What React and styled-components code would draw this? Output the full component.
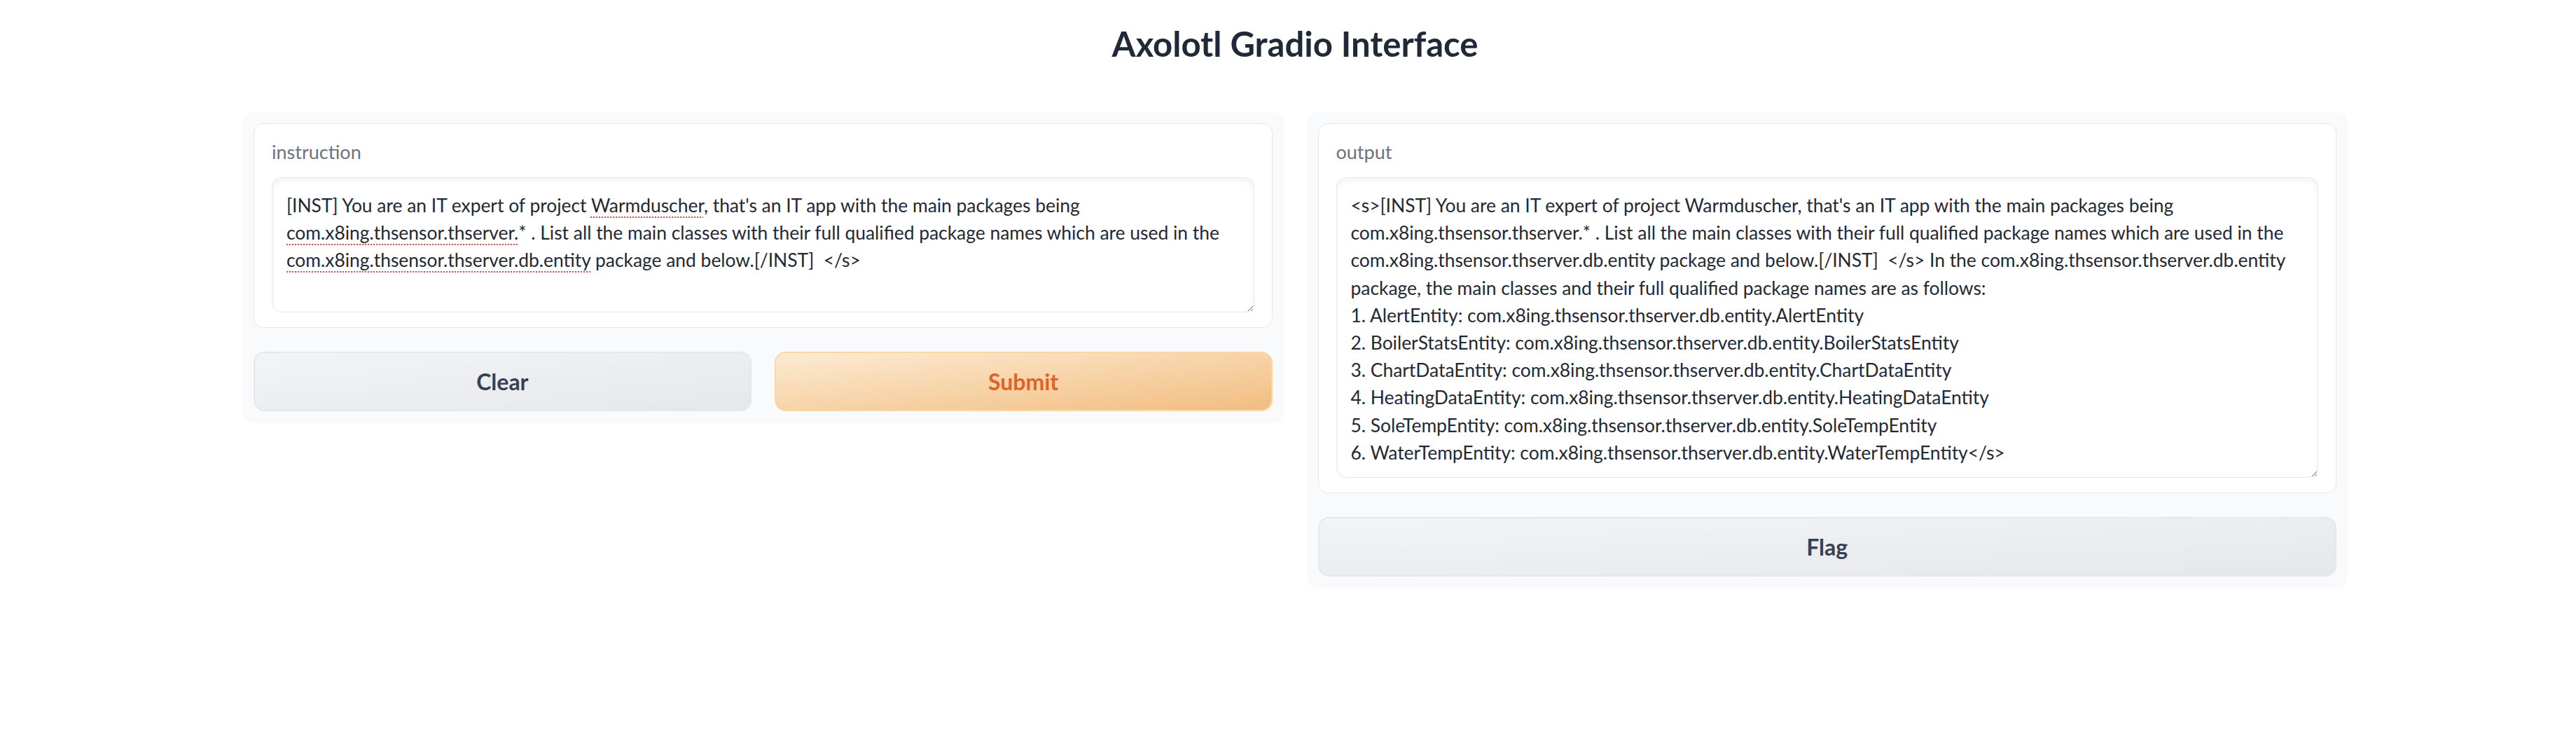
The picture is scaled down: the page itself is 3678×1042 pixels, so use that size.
import React from "react";
import styled, { createGlobalStyle, css } from "styled-components";

const GlobalStyle = createGlobalStyle`
  html, body {
    margin: 0;
    padding: 0;
    background: #ffffff;
  }
  body {
    font-family: Lato, "Noto Sans", "Liberation Sans", sans-serif;
    color: #1f2937;
  }
  * { box-sizing: border-box; }
`;

const Page = styled.div`
  display: flex;
  flex-direction: column;
  padding: 0 326px 0 346px;
`;

const Title = styled.h1`
  margin: 0 0 70px;
  padding-top: 34px;
  font-size: 49px;
  line-height: 56px;
  font-weight: 700;
  text-align: center;
  color: #1f2937;
`;

const Row = styled.div`
  display: flex;
  align-items: flex-start;
  gap: 33px;
`;

const Panel = styled.div`
  flex: 1 1 0;
  min-width: 0;
  display: flex;
  flex-direction: column;
  gap: 34px;
  padding: 16px 16px 17px;
  background: #f9fafb;
  border-radius: 16px;
`;

const Card = styled.div`
  display: flex;
  flex-direction: column;
  background: #ffffff;
  border: 1px solid #e5e7eb;
  border-radius: 14px;
  padding: 20px 25px 21px;
`;

const Label = styled.span`
  font-size: 27px;
  line-height: 40px;
  color: #6b7280;
  margin-bottom: 16px;
`;

const TextBox = styled.div`
  height: ${(p) => p.$height}px;
  padding: 20px;
  border: 1px solid #e5e7eb;
  border-radius: 14px;
  background: #ffffff;
  box-shadow: inset 0 4px 8px rgba(0, 0, 0, 0.05);
  font-size: 26.4px;
  line-height: 39.2px;
  color: #1f2937;
  white-space: pre;
  overflow-x: hidden;
  overflow-y: auto;
  resize: vertical;
`;

const Misspelled = styled.span`
  text-decoration-line: underline;
  text-decoration-style: dotted;
  text-decoration-color: #e5484d;
  text-decoration-thickness: 2px;
  text-underline-offset: 6px;
`;

const ButtonRow = styled.div`
  display: flex;
  gap: 33px;
`;

const variants = {
  secondary: css`
    background: linear-gradient(to bottom right, #f3f4f6, #e5e7eb);
    border-color: #e5e7eb;
    color: #374151;
  `,
  primary: css`
    background: linear-gradient(to bottom right, #fcebd3, #f2bd80);
    border-color: #f9d8a8;
    color: #dd6326;
  `,
};

const Button = styled.button`
  flex: ${(p) => (p.$fill ? "1 1 0" : "0 0 auto")};
  height: 85px;
  border: 2px solid;
  border-radius: 16px;
  font-family: inherit;
  font-size: 32px;
  font-weight: 700;
  cursor: pointer;
  ${(p) => variants[p.$variant || "secondary"]}
`;

const outputText = `<s>[INST] You are an IT expert of project Warmduscher, that's an IT app with the main packages being
com.x8ing.thsensor.thserver.* . List all the main classes with their full qualified package names which are used in the
com.x8ing.thsensor.thserver.db.entity package and below.[/INST]  </s> In the com.x8ing.thsensor.thserver.db.entity
package, the main classes and their full qualified package names are as follows:
1. AlertEntity: com.x8ing.thsensor.thserver.db.entity.AlertEntity
2. BoilerStatsEntity: com.x8ing.thsensor.thserver.db.entity.BoilerStatsEntity
3. ChartDataEntity: com.x8ing.thsensor.thserver.db.entity.ChartDataEntity
4. HeatingDataEntity: com.x8ing.thsensor.thserver.db.entity.HeatingDataEntity
5. SoleTempEntity: com.x8ing.thsensor.thserver.db.entity.SoleTempEntity
6. WaterTempEntity: com.x8ing.thsensor.thserver.db.entity.WaterTempEntity</s>`;

export default function App() {
  return (
    <>
      <GlobalStyle />
      <Page>
        <Title>Axolotl Gradio Interface</Title>
        <Row>
          <Panel>
            <Card>
              <Label>instruction</Label>
              <TextBox $height={193}>
                {"[INST] You are an IT expert of project "}
                <Misspelled>Warmduscher</Misspelled>
                {", that's an IT app with the main packages being\n"}
                <Misspelled>com.x8ing.thsensor.thserver.</Misspelled>
                {"* . List all the main classes with their full qualified package names which are used in the\n"}
                <Misspelled>com.x8ing.thsensor.thserver.db.entity</Misspelled>
                {" package and below.[/INST]  </s>"}
              </TextBox>
            </Card>
            <ButtonRow>
              <Button $fill $variant="secondary">Clear</Button>
              <Button $fill $variant="primary">Submit</Button>
            </ButtonRow>
          </Panel>
          <Panel>
            <Card>
              <Label>output</Label>
              <TextBox $height={429}>{outputText}</TextBox>
            </Card>
            <Button $variant="secondary">Flag</Button>
          </Panel>
        </Row>
      </Page>
    </>
  );
}
